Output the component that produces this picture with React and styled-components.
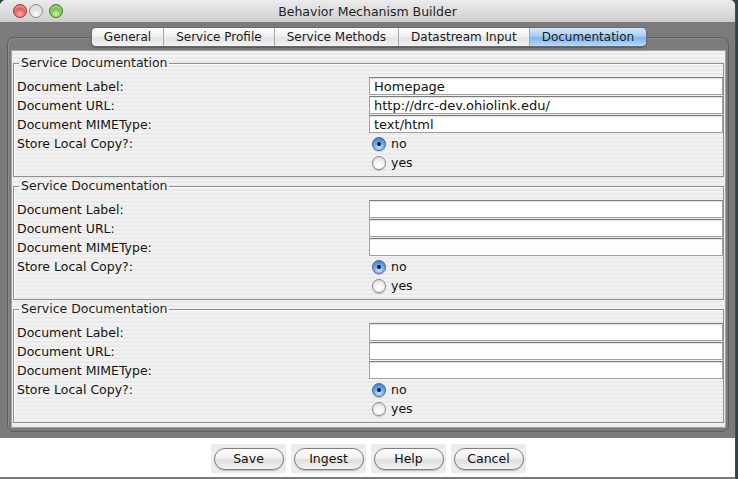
import styled, { createGlobalStyle } from "styled-components";

const GlobalStyle = createGlobalStyle`
    html, body {
        margin: 0;
        padding: 0;
        background: #24464a;
    }
    body {
        font-family: "DejaVu Sans", "Liberation Sans", sans-serif;
        font-size: 12px;
        color: #111;
    }
`;

const Screen = styled.div`
    width: 738px;
    height: 479px;
    display: flex;
    overflow: hidden;
`;

const Window = styled.div`
    width: 735px;
    height: 477px;
    display: flex;
    flex-direction: column;
    border-radius: 6px 6px 0 0;
    overflow: hidden;
    border-right: 1px solid #4a4a4a;
    border-bottom: 2px solid #7a7a7a;
    background: #fff;
`;

const TitleBar = styled.div`
    height: 22px;
    flex: none;
    position: relative;
    display: flex;
    align-items: center;
    justify-content: center;
    background: linear-gradient(#ececec, #dadada 60%, #cdcdcd);
    font-size: 12.5px;
    color: #1e1e1e;
`;

const Lights = styled.div`
    position: absolute;
    left: 13px;
    top: 4px;
    display: flex;
    gap: 2px;
`;

const Light = styled.span`
    width: 14px;
    height: 14px;
    border-radius: 50%;
    margin-right: ${(p) => p.$gap || 0}px;
    box-sizing: border-box;
    border: 1px solid ${(p) => p.$edge};
    background: radial-gradient(circle at 50% 75%, ${(p) => p.$glow} 0%, ${(p) => p.$color} 60%, ${(p) => p.$dark} 100%);
    box-shadow: inset 0 2px 2px rgba(255, 255, 255, 0.55);
`;

const Body = styled.div`
    height: 416px;
    flex: none;
    box-sizing: border-box;
    background: #7b7b7b;
    padding: 5px 6px 6px 7px;
    display: flex;
    flex-direction: column;
`;

const TabStrip = styled.div`
    display: flex;
    justify-content: center;
    position: relative;
    z-index: 1;
    padding-left: 2px;
`;

const TabGroup = styled.div`
    display: flex;
    height: 20px;
    box-sizing: border-box;
    border: 1px solid #6a6a6a;
    border-radius: 5px;
    overflow: hidden;
    box-shadow: 0 1px 1px rgba(0, 0, 0, 0.25);
`;

const Tab = styled.div`
    padding: 0 12px;
    line-height: 18px;
    font-size: 12px;
    color: #1a1a1a;
    border-left: ${(p) => (p.$first ? "none" : "1px solid #a9a9a9")};
    background: ${(p) =>
        p.$active
            ? "linear-gradient(#d6e8fa, #a7cdf3 45%, #7fb5ec 55%, #b7dafc)"
            : "linear-gradient(#fdfdfd, #f1f1f1 45%, #e3e3e3 55%, #f3f3f3)"};
`;

const Pane = styled.div`
    flex: 1;
    margin-top: -10px;
    border: 1px solid #5e5e5e;
    border-radius: 7px;
    box-shadow: inset 1px 1px 0 #8d8d8d;
    padding: 12px 2px 3px 3px;
    display: flex;
`;

const Panel = styled.div`
    flex: 1;
    border: 1px solid #a3a3a3;
    background: repeating-linear-gradient(#f2f2f2 0 2px, #eaeaea 2px 4px);
    padding: 5px 1px 0 1px;
    display: flex;
    flex-direction: column;
    gap: 2px;
`;

const Section = styled.fieldset`
    margin: 0;
    padding: 7px 0 4px 3px;
    border: 1px solid #8f8f8f;
    box-shadow: inset 1px 1px 0 #fbfbfb;
    min-width: 0;
`;

const Legend = styled.legend`
    padding: 0 1px 0 2px;
    margin-left: 2px;
    line-height: 14px;
    font-size: 12.5px;
    color: #1c1c1c;
`;

const Grid = styled.div`
    display: grid;
    grid-template-columns: 352px 1fr;
    grid-auto-rows: 19px;
    align-items: center;
`;

const Label = styled.div`
    grid-column: 1;
    font-size: 12.5px;
    color: #141414;
`;

const Field = styled.div`
    grid-column: 2;
    height: 18px;
    box-sizing: border-box;
    align-self: start;
    background: #fff;
    border: 1px solid #a0a0a0;
    border-top-color: #7b7b7b;
    box-shadow: inset 0 1px 1px rgba(0, 0, 0, 0.12);
    padding: 0 4px;
    line-height: 17px;
    font-size: 13px;
    color: #111;
    white-space: nowrap;
    overflow: hidden;
`;

const RadioRow = styled.label`
    grid-column: 2;
    display: flex;
    align-items: center;
    gap: 5px;
    padding-left: 3px;
    font-size: 12.5px;
    color: #111;
`;

const RadioDot = styled.span`
    width: 14px;
    height: 14px;
    box-sizing: border-box;
    border-radius: 50%;
    display: flex;
    align-items: center;
    justify-content: center;
    border: 1px solid ${(p) => (p.$on ? "#41689a" : "#8a8a8a")};
    background: ${(p) =>
        p.$on
            ? "radial-gradient(circle at 50% 80%, #bfe3ff 0%, #69a8ec 50%, #2f6fc8 100%)"
            : "radial-gradient(circle at 50% 80%, #ffffff 0%, #f3f3f3 50%, #cfcfcf 100%)"};
    box-shadow: 0 1px 1px rgba(0, 0, 0, 0.2);

    &::after {
        content: "";
        width: 4px;
        height: 4px;
        border-radius: 50%;
        background: #111;
        display: ${(p) => (p.$on ? "block" : "none")};
    }
`;

const Footer = styled.div`
    flex: 1;
    background: #fff;
    display: flex;
    justify-content: center;
    align-items: flex-start;
    gap: 5px;
    padding-top: 6px;
    padding-left: 2px;
`;

const ButtonWell = styled.div`
    width: 75px;
    height: 29px;
    background: #ececec;
    display: flex;
    align-items: center;
    justify-content: center;
`;

const Button = styled.button`
    width: 70px;
    height: 22px;
    border-radius: 11px;
    border: 1px solid #7e7e7e;
    background: linear-gradient(#fefefe, #f2f2f2 45%, #dedede 55%, #f4f4f4);
    box-shadow: 0 1px 1px rgba(0, 0, 0, 0.2);
    font-family: "DejaVu Sans", "Liberation Sans", sans-serif;
    font-size: 12.5px;
    color: #111;
    padding: 0;
`;

const tabs = ["General", "Service Profile", "Service Methods", "Datastream Input", "Documentation"];

const docs = [
    { label: "Homepage", url: "http://drc-dev.ohiolink.edu/", mime: "text/html" },
    { label: "", url: "", mime: "" },
    { label: "", url: "", mime: "" },
];

const DocSection = ({ doc }) => (
    <Section>
        <Legend>Service Documentation</Legend>
        <Grid>
            <Label>Document Label:</Label>
            <Field>{doc.label}</Field>
            <Label>Document URL:</Label>
            <Field>{doc.url}</Field>
            <Label>Document MIMEType:</Label>
            <Field>{doc.mime}</Field>
            <Label>Store Local Copy?:</Label>
            <RadioRow>
                <RadioDot $on />
                no
            </RadioRow>
            <Label />
            <RadioRow>
                <RadioDot />
                yes
            </RadioRow>
        </Grid>
    </Section>
);

const App = () => {
    return (
        <Screen>
            <GlobalStyle />
            <Window>
                <TitleBar>
                    <Lights>
                        <Light $color="#e2463f" $glow="#ffb3a6" $dark="#a21b14" $edge="#9a3a36" />
                        <Light $color="#d9d9d9" $glow="#ffffff" $dark="#a9a9a9" $edge="#8f8f8f" $gap={4} />
                        <Light $color="#59b937" $glow="#d3f7a8" $dark="#2d7f17" $edge="#3f7d2d" />
                    </Lights>
                    Behavior Mechanism Builder
                </TitleBar>
                <Body>
                    <TabStrip>
                        <TabGroup>
                            {tabs.map((t, i) => (
                                <Tab key={t} $first={i === 0} $active={t === "Documentation"}>
                                    {t}
                                </Tab>
                            ))}
                        </TabGroup>
                    </TabStrip>
                    <Pane>
                        <Panel>
                            {docs.map((d, i) => (
                                <DocSection key={i} doc={d} />
                            ))}
                        </Panel>
                    </Pane>
                </Body>
                <Footer>
                    {["Save", "Ingest", "Help", "Cancel"].map((b) => (
                        <ButtonWell key={b}>
                            <Button>{b}</Button>
                        </ButtonWell>
                    ))}
                </Footer>
            </Window>
        </Screen>
    );
};

export default App;
